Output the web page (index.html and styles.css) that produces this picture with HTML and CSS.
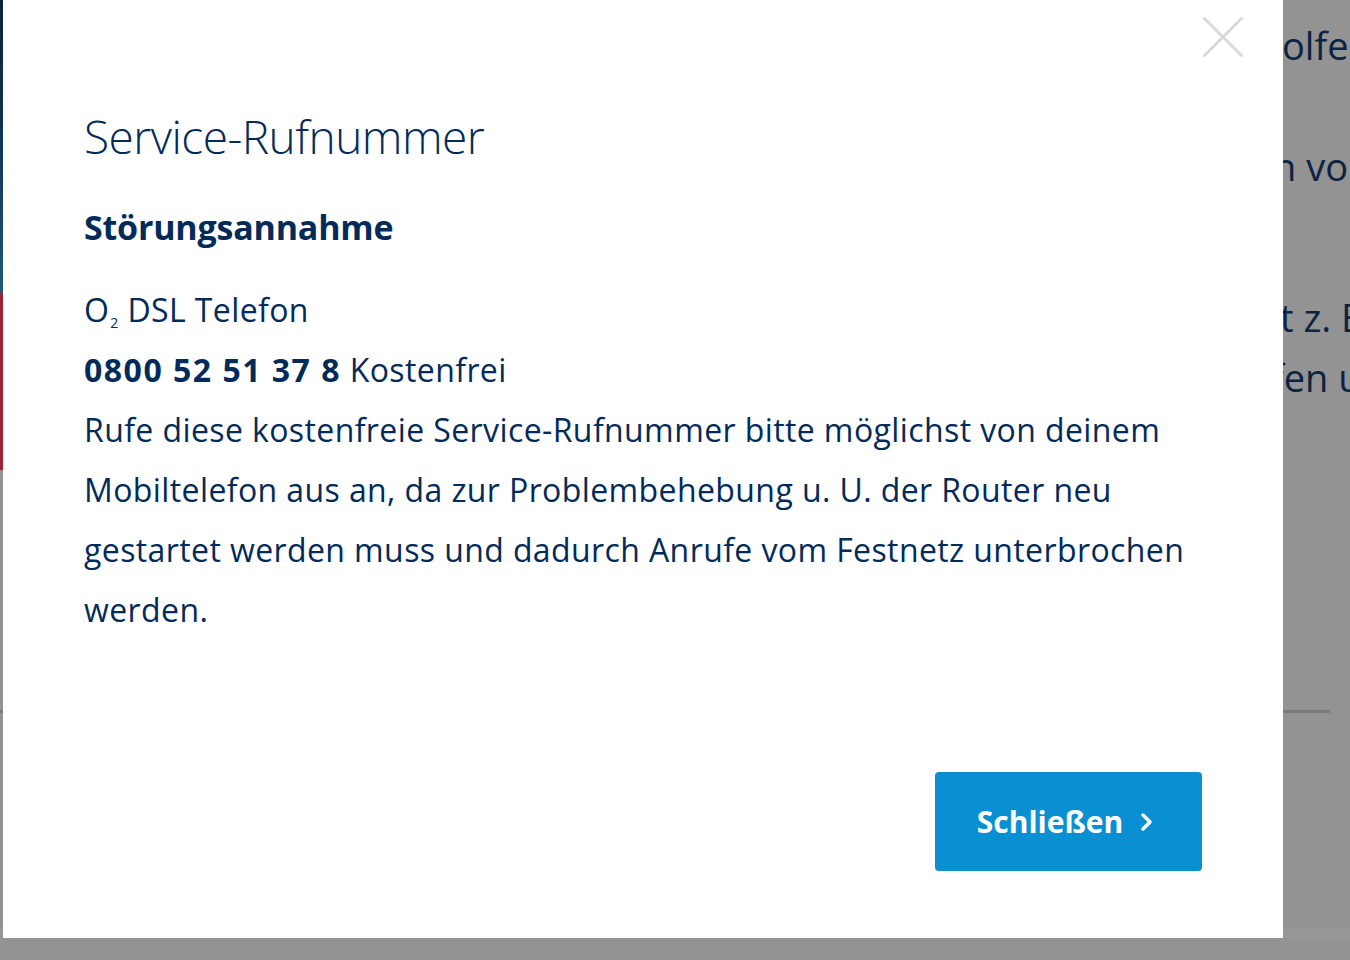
FILE: index.html
```html
<!DOCTYPE html>
<html lang="de">
<head>
    <meta charset="UTF-8">
    <meta name="viewport" content="width=device-width, initial-scale=1.0">
    <title>Service-Rufnummer</title>
    <link rel="stylesheet" href="styles.css">
</head>
<body>
    <div class="page">
        <div class="page-top">
            <div class="hero"></div>
            <div class="aside">
                <p class="aside-line first">olfen</p>
                <p class="aside-line second">n vom</p>
                <p class="aside-line third">t z. B.</p>
                <p class="aside-line fourth">fen und</p>
            </div>
        </div>
        <div class="rule"></div>
    </div>

    <div class="overlay">
        <div class="modal">
            <button type="button" class="close" aria-label="Schließen">
                <svg width="40" height="40" viewBox="0 0 40 40">
                    <path d="M1.5 1.5 L38.5 38.5 M38.5 1.5 L1.5 38.5" stroke="#d9d9d9" stroke-width="3" fill="none" stroke-linecap="round"/>
                </svg>
            </button>
            <h2 class="modal-title">Service-Rufnummer</h2>
            <h3 class="modal-subtitle">Störungsannahme</h3>
            <div class="modal-body">
                <p>O<sub>2</sub> DSL Telefon</p>
                <p><strong>0800 52 51 37 8</strong> Kostenfrei</p>
                <p>Rufe diese kostenfreie Service-Rufnummer bitte möglichst von deinem Mobiltelefon aus an, da zur Problembehebung u. U. der Router neu gestartet werden muss und dadurch Anrufe vom Festnetz unterbrochen werden.</p>
            </div>
            <div class="modal-actions">
                <button type="button" class="btn-primary">
                    Schließen
                    <svg width="14" height="20" viewBox="0 0 14 20">
                        <path d="M3 3 L10 10 L3 17" stroke="#fff" stroke-width="3.5" fill="none" stroke-linecap="round" stroke-linejoin="round"/>
                    </svg>
                </button>
            </div>
        </div>
    </div>
</body>
</html>
```

FILE: styles.css
```css
html, body {
    margin: 0;
    padding: 0;
}

body {
    font-family: 'Open Sans', 'Noto Sans', sans-serif;
    background-color: #939393;
    color: #032b5a;
    width: 1350px;
    height: 960px;
    overflow: hidden;
}

/* page behind the overlay */
.page {
    height: 928px;
    background-color: #939393;
    border-bottom: 10px solid #979797;
}

.page-top {
    display: flex;
}

.hero {
    flex: none;
    width: 1276px;
    height: 470px;
    background: linear-gradient(180deg, #0b213f 0, #123656 150px, #1f5878 290px, #9a2536 296px, #9a2536 100%);
}

.aside {
    flex: 1;
    padding-top: 15px;
    white-space: nowrap;
    overflow: hidden;
}

.aside-line {
    margin: 0;
    font-size: 38px;
    line-height: 60px;
    color: #0d2342;
}

.aside-line.first {
    padding-left: 6px;
}

.aside-line.second {
    margin-top: 61px;
    margin-left: -3px;
}

.aside-line.third {
    margin-top: 91px;
    margin-left: 4px;
}

.aside-line.fourth {
    margin-left: -5px;
}

.rule {
    margin-top: 240px;
    margin-right: 20px;
    height: 3px;
    background-color: #7c7c7c;
}

/* modal */
.overlay {
    position: absolute;
    top: 0;
    left: 3px;
}

.modal {
    position: relative;
    width: 1280px;
    height: 938px;
    box-sizing: border-box;
    padding: 108px 81px 0;
    background-color: #fff;
    display: flex;
    flex-direction: column;
}

.close {
    position: absolute;
    top: 17px;
    right: 40px;
    width: 40px;
    height: 40px;
    padding: 0;
    border: none;
    background: none;
    cursor: pointer;
}

.close svg {
    display: block;
}

.modal-title {
    margin: 0;
    font-size: 46px;
    font-weight: 300;
    line-height: 56px;
    letter-spacing: -0.5px;
}

.modal-subtitle {
    margin: 43px 0 0;
    font-size: 34px;
    font-weight: 700;
    line-height: 40px;
    letter-spacing: -0.2px;
}

.modal-body {
    margin-top: 33px;
    font-size: 32px;
    line-height: 60px;
    letter-spacing: 0.4px;
}

.modal-body p {
    margin: 0;
}

.modal-body strong {
    font-weight: 700;
    letter-spacing: 1.5px;
}

.modal-body sub {
    font-size: 14px;
    vertical-align: -6px;
    line-height: 0;
    margin-left: 1px;
}

.modal-actions {
    display: flex;
    justify-content: flex-end;
    margin-top: 132px;
}

.btn-primary {
    display: flex;
    align-items: center;
    justify-content: center;
    gap: 17px;
    width: 267px;
    height: 99px;
    padding: 0 6px 0 0;
    border: none;
    border-radius: 4px;
    background-color: #0a8fd3;
    color: #fff;
    font-family: 'Open Sans', 'Noto Sans', sans-serif;
    font-size: 30px;
    font-weight: 700;
    cursor: pointer;
}

.btn-primary:hover {
    background-color: #0880bd;
}
```
